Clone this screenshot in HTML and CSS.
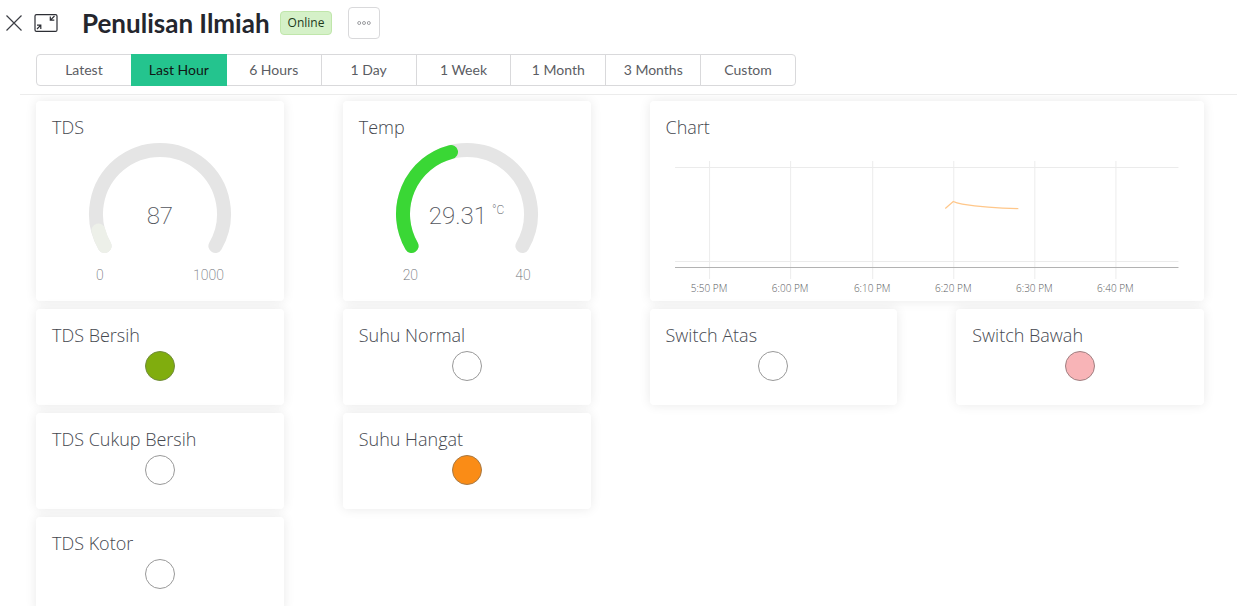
FILE: index.html
```html
<!DOCTYPE html>
<html lang="id">
<head>
<meta charset="utf-8">
<meta name="viewport" content="width=device-width, initial-scale=1">
<title>Penulisan Ilmiah</title>
<link rel="stylesheet" href="styles.css">
</head>
<body>
<div class="app">
  <header class="header">
    <div class="title-bar">
      <button class="icon-button" type="button" aria-label="Close">
        <svg width="16" height="16" viewBox="0 0 16 16" fill="none" stroke="#3c3e44" stroke-width="1.2"><path d="M0.5 0.5L15.5 15.5M15.5 0.5L0.5 15.5"/></svg>
      </button>
      <button class="icon-button collapse" type="button" aria-label="Exit full screen">
        <svg width="24" height="18" viewBox="0 0 24 18" fill="none" stroke="#2c2e34" stroke-width="1.2"><rect x="1" y="0.6" width="22" height="16.8" rx="1.5"/><path d="M20.5 2L16.7 5.8M16.3 2.5V6.2H20.3M3 15L6.6 11.4M3 11.2H6.8V15"/></svg>
      </button>
      <h1 class="title">Penulisan Ilmiah</h1>
      <span class="status">Online</span>
      <button class="more" type="button" aria-label="More actions">
        <svg width="14" height="6" viewBox="0 0 14 6" fill="none" stroke="#85878c" stroke-width="0.8"><circle cx="2.2" cy="3" r="1.5"/><circle cx="7" cy="3" r="1.5"/><circle cx="11.8" cy="3" r="1.5"/></svg>
      </button>
    </div>
    <nav class="ranges" aria-label="Time range">
      <button class="range" type="button">Latest</button>
      <button class="range active" type="button" aria-pressed="true">Last Hour</button>
      <button class="range" type="button">6 Hours</button>
      <button class="range" type="button">1 Day</button>
      <button class="range" type="button">1 Week</button>
      <button class="range" type="button">1 Month</button>
      <button class="range" type="button">3 Months</button>
      <button class="range" type="button">Custom</button>
    </nav>
  </header>
  <main class="dashboard">
    <section class="card">
      <h2 class="card-title">TDS</h2>
      <div class="gauge">
        <svg class="gauge-arc" width="144" height="116" viewBox="0 0 144 116" fill="none" stroke-width="14" stroke-linecap="round"><path stroke="#e5e5e5" d="M16.6 106A64 64 0 1 1 127.4 106"/><path stroke="#edf0e9" d="M16.6 106A64 64 0 0 1 10.4 90.5"/></svg>
        <div class="reading">87</div>
        <div class="scale"><span>0</span><span>1000</span></div>
      </div>
    </section>
    <section class="card">
      <h2 class="card-title">Temp</h2>
      <div class="gauge">
        <svg class="gauge-arc" width="144" height="116" viewBox="0 0 144 116" fill="none" stroke-width="14" stroke-linecap="round"><path stroke="#e5e5e5" d="M16.6 106A64 64 0 1 1 127.4 106"/><path stroke="#3ad735" d="M16.6 106A64 64 0 0 1 56 12"/></svg>
        <div class="reading">29.31<span class="unit">°C</span></div>
        <div class="scale two-digit"><span>20</span><span>40</span></div>
      </div>
    </section>
    <section class="card wide">
      <h2 class="card-title">Chart</h2>
      <svg class="chart" viewBox="0 0 522 140" role="img" aria-label="Chart">
        <path class="grid-line" d="M9 12.5H512M9 106.5H512M43.5 6V124M124.5 6V124M206.5 6V124M287.5 6V124M368.5 6V124M449.5 6V124"/>
        <path class="axis" d="M9 112.5H512"/>
        <path class="series" d="M279 53.5L287 46.5Q290 48 296 49Q320 53 352 53.5"/>
        <g class="ticks"><text x="43" y="137">5:50 PM</text><text x="124" y="137">6:00 PM</text><text x="206" y="137">6:10 PM</text><text x="287" y="137">6:20 PM</text><text x="368" y="137">6:30 PM</text><text x="449" y="137">6:40 PM</text></g>
      </svg>
    </section>
    <section class="card"><h2 class="card-title">TDS Bersih</h2><div class="led green"></div></section>
    <section class="card"><h2 class="card-title">Suhu Normal</h2><div class="led"></div></section>
    <section class="card"><h2 class="card-title">Switch Atas</h2><div class="led"></div></section>
    <section class="card"><h2 class="card-title">Switch Bawah</h2><div class="led pink"></div></section>
    <section class="card first"><h2 class="card-title">TDS Cukup Bersih</h2><div class="led"></div></section>
    <section class="card"><h2 class="card-title">Suhu Hangat</h2><div class="led orange"></div></section>
    <section class="card first"><h2 class="card-title">TDS Kotor</h2><div class="led"></div></section>
  </main>
</div>
</body>
</html>
```
FILE: styles.css
```css
* { box-sizing: border-box; }
body { margin: 0; background: #fff; color: #45484f; font-family: "Open Sans", "Noto Sans", sans-serif; }
button { font: inherit; color: inherit; cursor: pointer; }
svg { display: block; }
.app { display: flex; flex-direction: column; height: 100vh; }
.header { flex: none; margin-left: 20px; padding: 7px 16px 8px; border-bottom: 1px solid #ececec; }
.title-bar { display: flex; align-items: center; height: 32px; margin-left: -30px; }
.icon-button { padding: 0; border: 0; background: none; }
.collapse { margin-left: 12px; }
.title { margin: 0 0 0 24px; color: #24262d; font: 700 26px/32px Lato, sans-serif; white-space: nowrap; }
.status { margin-left: 10px; padding: 0 7px; border: 1px solid #c0e6ab; border-radius: 4px; background: #d5f1c8; color: #20391a; font-size: 12px; line-height: 22px; }
.more { display: grid; place-items: center; width: 32px; height: 32px; margin-left: 16px; padding: 0; border: 1px solid #d9d9db; border-radius: 4px; background: #fff; }
.ranges { display: flex; width: 760px; max-width: 100%; margin-top: 15px; }
.range { flex: 1 1 0; height: 32px; margin-left: -1px; padding: 0; border: 1px solid #d9d9db; background: #fff; font: 400 14px/30px Lato, sans-serif; color: #5b5d63; white-space: nowrap; }
.range:first-child { margin-left: 0; border-radius: 4px 0 0 4px; }
.range:last-child { border-radius: 0 4px 4px 0; }
.range.active { z-index: 1; border-color: #24c48e; background: #24c48e; color: #101614; }
.dashboard { display: grid; flex: 1; grid-template-columns: repeat(4, minmax(0, 1fr)); grid-auto-rows: 96px; grid-template-rows: minmax(200px, auto); gap: 8px 59px; align-content: start; padding: 6px 33px 8px 36px; overflow-y: auto; scrollbar-width: none; }
.card { padding: 14px 16px; border-radius: 4px; background: #fff; box-shadow: 0 0 12px rgba(0, 0, 0, 0.09); }
.wide { grid-column: span 2; }
.first { grid-column-start: 1; }
.card-title { margin: 0; font-size: 18px; font-weight: 300; line-height: 24px; }
.led { width: 30px; height: 30px; margin: 4px auto 0; border: 1px solid #999; border-radius: 50%; }
.green { border-color: #718c3c; background: #80ad0e; }
.orange { border-color: #a87a45; background: #fa8c16; }
.pink { border-color: #a08082; background: #f8b4b7; }
.gauge { display: grid; justify-content: center; margin-top: 1px; font-family: Roboto, sans-serif; font-weight: 200; color: #6c6f76; }
.gauge-arc, .reading { grid-area: 1 / 1; }
.reading { display: flex; justify-content: center; gap: 5px; padding-top: 59px; font-size: 24px; line-height: 34px; color: #53565d; }
.unit { font-size: 12px; line-height: 22px; }
.scale { display: flex; justify-content: space-between; margin: 7px 8px 0; font-size: 14px; line-height: 24px; }
.chart { width: 100%; margin-top: 16px; }
.grid-line { fill: none; stroke: #000; stroke-opacity: 0.08; }
.axis { stroke: #b2b2b2; }
.series { fill: none; stroke: #ffc78a; stroke-width: 1.2; }
.ticks { fill: #5b5d63; font-size: 10px; font-weight: 300; text-anchor: middle; }
```
